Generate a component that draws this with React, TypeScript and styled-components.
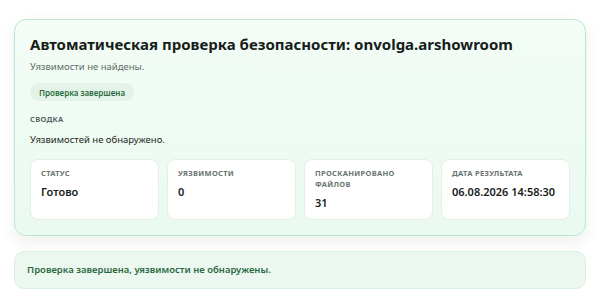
import React from 'react';
import styled, { createGlobalStyle } from 'styled-components';

const GlobalStyle = createGlobalStyle`
  html, body {
    margin: 0;
    padding: 0;
    background: #ffffff;
  }
  body {
    font-family: 'Noto Sans', 'Open Sans', sans-serif;
    color: #1c2421;
  }
`;

const Page = styled.div`
  padding: 19px 14px 10px 14px;
  display: flex;
  flex-direction: column;
  gap: 15px;
`;

const ReportCard = styled.section`
  background: linear-gradient(180deg, #f3fcf6 0%, #eafaf0 100%);
  border: 1px solid #bfe5cb;
  border-radius: 12px;
  padding: 14px 15px 15px 15px;
  box-shadow: 0 6px 16px rgba(30, 60, 40, 0.08);
`;

const Title = styled.h1`
  font-size: 15px;
  line-height: 20px;
  font-weight: 700;
  color: #161d1a;
  margin: 0;
  white-space: nowrap;
`;

const Subtitle = styled.p`
  font-size: 9.5px;
  line-height: 13px;
  color: #5f6b66;
  margin: 6px 0 0 0;
`;

const Badge = styled.span`
  display: inline-flex;
  align-items: center;
  height: 18px;
  padding: 0 9px;
  margin-top: 10px;
  border-radius: 9px;
  background: #e3f3e8;
  color: #2c6b41;
  font-size: 8px;
  font-weight: 600;
`;

const SectionLabel = styled.div`
  font-size: 7.5px;
  line-height: 11px;
  font-weight: 700;
  letter-spacing: 0.3px;
  text-transform: uppercase;
  color: #5c6662;
  margin-top: 13px;
`;

const SummaryText = styled.p`
  font-size: 9.5px;
  line-height: 13px;
  color: #1f2724;
  margin: 8px 0 0 0;
`;

const StatsGrid = styled.div`
  display: grid;
  grid-template-columns: repeat(4, 1fr);
  gap: 8px;
  margin-top: 13px;
`;

const StatCard = styled.div`
  background: #ffffff;
  border: 1px solid #e4efe8;
  border-radius: 8px;
  padding: 8px 10px 8px 10px;
  height: 61px;
  box-sizing: border-box;
`;

const StatLabel = styled.div`
  font-size: 7.5px;
  line-height: 11px;
  font-weight: 700;
  letter-spacing: 0.3px;
  text-transform: uppercase;
  color: #6a7470;
`;

const StatValue = styled.div`
  font-size: 11px;
  line-height: 15px;
  font-weight: 600;
  color: #161d1a;
  margin-top: 5px;
  white-space: nowrap;
`;

const Notice = styled.div`
  background: #ecf7ef;
  border: 1px solid #dcefe2;
  border-radius: 10px;
  padding: 11px 12px;
  font-size: 9.5px;
  line-height: 14px;
  font-weight: 600;
  color: #2a6a3f;
`;

const stats = [
  { label: 'Статус', value: 'Готово' },
  { label: 'Уязвимости', value: '0' },
  { label: 'Просканировано файлов', value: '31' },
  { label: 'Дата результата', value: '06.08.2026 14:58:30' },
];

export default function App() {
  return (
    <>
      <GlobalStyle />
      <Page>
        <ReportCard>
          <Title>Автоматическая проверка безопасности: onvolga.arshowroom</Title>
          <Subtitle>Уязвимости не найдены.</Subtitle>
          <Badge>Проверка завершена</Badge>
          <SectionLabel>Сводка</SectionLabel>
          <SummaryText>Уязвимостей не обнаружено.</SummaryText>
          <StatsGrid>
            {stats.map((s) => (
              <StatCard key={s.label}>
                <StatLabel>{s.label}</StatLabel>
                <StatValue>{s.value}</StatValue>
              </StatCard>
            ))}
          </StatsGrid>
        </ReportCard>
        <Notice>Проверка завершена, уязвимости не обнаружены.</Notice>
      </Page>
    </>
  );
}
